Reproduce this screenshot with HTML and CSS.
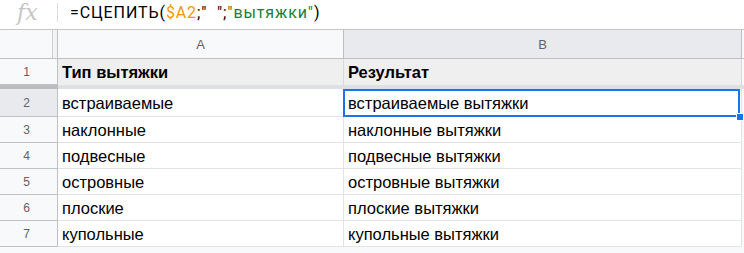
FILE: index.html
```html
<!DOCTYPE html>
<html lang="ru">
<head>
  <meta charset="UTF-8" />
  <meta name="viewport" content="width=device-width, initial-scale=1.0" />
  <title>Сцепить</title>
  <link rel="stylesheet" href="styles.css">
</head>
<body>
  <!-- formula bar -->
  <div class="formula-bar">
    <span class="fx">fx</span>
    <span class="fx-sep"></span>
    <div class="formula">=СЦЕПИТЬ(<span class="ref">$A2</span>;"&nbsp;&nbsp;";<span class="str">"вытяжки"</span>)</div>
  </div>

  <!-- grid -->
  <div class="sheet">
    <div class="corner"></div>
    <div class="col-head">A</div>
    <div class="col-head active">B</div>
    <div class="filler head"></div>

    <div class="row-head">1</div>
    <div class="cell frozen bold">Тип вытяжки</div>
    <div class="cell frozen bold">Результат</div>
    <div class="filler"></div>

    <div class="freeze-head"></div>
    <div class="freeze-bar"></div>

    <div class="row-head active">2</div>
    <div class="cell">встраиваемые</div>
    <div class="cell selected">встраиваемые вытяжки<span class="selection"><span class="handle"></span></span></div>
    <div class="filler"></div>

    <div class="row-head">3</div>
    <div class="cell">наклонные</div>
    <div class="cell">наклонные вытяжки</div>
    <div class="filler"></div>

    <div class="row-head">4</div>
    <div class="cell">подвесные</div>
    <div class="cell">подвесные вытяжки</div>
    <div class="filler"></div>

    <div class="row-head">5</div>
    <div class="cell">островные</div>
    <div class="cell">островные вытяжки</div>
    <div class="filler"></div>

    <div class="row-head">6</div>
    <div class="cell">плоские</div>
    <div class="cell">плоские вытяжки</div>
    <div class="filler"></div>

    <div class="row-head">7</div>
    <div class="cell">купольные</div>
    <div class="cell">купольные вытяжки</div>
    <div class="filler"></div>

    <div class="bottom-space"></div>
  </div>
</body>
</html>
```

FILE: styles.css
```css
/* Reset */
html, body {
  margin: 0;
  padding: 0;
  height: 100%;
  overflow: hidden;
  background: #fff;
}

* { box-sizing: border-box; }

/* Formula bar */
.formula-bar {
  height: 30px;
  display: flex;
  align-items: center;
  border-bottom: 1px solid #c4c7c5;
  background: #fff;
}
.fx {
  width: 57px;
  padding-left: 17px;
  font-family: "DejaVu Serif", serif;
  font-style: italic;
  font-size: 22px;
  color: #c6c6c6;
  line-height: 1;
  margin-top: -4px;
}
.fx-sep {
  width: 1px;
  height: 19px;
  background: #dadce0;
  margin-top: -4px;
}
.formula {
  padding-left: 12px;
  margin-top: -4px;
  font-family: Roboto, "Liberation Sans", sans-serif;
  font-size: 16px;
  letter-spacing: 0.9px;
  color: #000;
}
.formula .ref { color: #f29900; }
.formula .str { color: #188038; }

/* Sheet grid */
.sheet {
  display: grid;
  grid-template-columns: 58px 286px 398px 1fr;
  grid-template-rows: 29px 26px 4px 28px 26px 26px 26px 26px 26px 1fr;
  height: calc(100% - 30px);
  font-family: "Liberation Sans", Arial, sans-serif;
}

.corner {
  background: #f8f9fa;
  border-right: 1px solid #c0c0c0;
  border-bottom: 1px solid #c0c0c0;
  box-shadow: inset -4px 0 0 #f1f3f4, inset -5px 0 0 #d0d0d0;
}
.col-head {
  background: #f8f9fa;
  border-right: 1px solid #c0c0c0;
  border-bottom: 1px solid #c0c0c0;
  display: flex;
  align-items: center;
  justify-content: center;
  font-size: 13px;
  color: #5f6368;
}
.col-head.active { background: #e8eaed; }

.row-head {
  background: #f8f9fa;
  border-right: 1px solid #c0c0c0;
  border-bottom: 1px solid #c0c0c0;
  display: flex;
  align-items: center;
  justify-content: center;
  padding-right: 4px;
  font-size: 12px;
  color: #5f6368;
}
.row-head.active { background: #e8eaed; }

.cell {
  border-right: 1px solid #e2e3e3;
  border-bottom: 1px solid #e2e3e3;
  display: flex;
  align-items: center;
  padding: 1px 4px 0;
  font-size: 16.5px;
  color: #000;
  white-space: nowrap;
}
.cell.frozen {
  background: #efefef;
  border-bottom: none;
  border-right-color: #d9d9d9;
}
.cell.bold { font-weight: bold; }
.cell.selected { position: relative; }

.filler {
  background: #f8f9fa;
  border-bottom: 1px solid #f8f9fa;
}
.filler.head { border-bottom: 1px solid #c0c0c0; }

/* frozen row divider */
.freeze-head { background: #bdbdbd; }
.freeze-bar {
  grid-column: 2 / 5;
  background: #dde1e6;
}

/* selection overlay on B2 */
.selection {
  position: absolute;
  left: -1px;
  top: 0;
  right: 1px;
  bottom: -1px;
  border: 2px solid #1a73e8;
  pointer-events: none;
}
.handle {
  position: absolute;
  right: -6px;
  bottom: -6px;
  width: 8px;
  height: 8px;
  background: #1a73e8;
  border: 1px solid #fff;
}

.bottom-space {
  grid-column: 1 / 5;
  background: #f8f9fa;
}
```
